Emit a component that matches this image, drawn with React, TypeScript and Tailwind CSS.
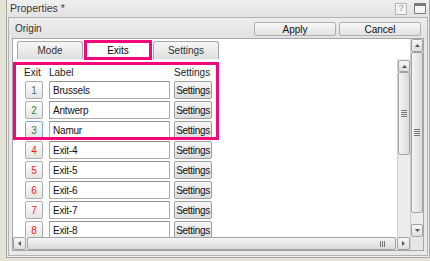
import React from "react";

const Up = () => (
  <svg width="7" height="5" viewBox="0 0 7 5"><path d="M1 4 L3.5 1 L6 4 Z" fill="#555" /></svg>
);
const Down = () => (
  <svg width="7" height="5" viewBox="0 0 7 5"><path d="M1 1 L3.5 4 L6 1 Z" fill="#555" /></svg>
);
const Left = () => (
  <svg width="5" height="7" viewBox="0 0 5 7"><path d="M4 1 L1 3.5 L4 6 Z" fill="#555" /></svg>
);
const Right = () => (
  <svg width="5" height="7" viewBox="0 0 5 7"><path d="M1 1 L4 3.5 L1 6 Z" fill="#555" /></svg>
);

const GripH = () => (
  <div className="flex flex-col gap-[1px]">
    <div className="w-[6px] h-[1px] bg-[#777]" />
    <div className="w-[6px] h-[1px] bg-[#777]" />
    <div className="w-[6px] h-[1px] bg-[#777]" />
    <div className="w-[6px] h-[1px] bg-[#777]" />
  </div>
);
const GripV = () => (
  <div className="flex flex-row gap-[1px]">
    <div className="w-[1px] h-[6px] bg-[#777]" />
    <div className="w-[1px] h-[6px] bg-[#777]" />
    <div className="w-[1px] h-[6px] bg-[#777]" />
  </div>
);

const SBtn = ({ children, cls }: { children: React.ReactNode; cls: string }) => (
  <div
    className={
      "flex items-center justify-center border border-[#a3a3a3] rounded-[2px] bg-gradient-to-b from-[#f8f8f8] to-[#dedede] " +
      cls
    }
  >
    {children}
  </div>
);

const numColors = ["#5b6b5b", "#2e8b2e", "#3a7a3a", "#ff1a1a", "#ff1a1a", "#ff1a1a", "#ff1a1a", "#ff1a1a"];
const labels = ["Brussels", "Antwerp", "Namur", "Exit-4", "Exit-5", "Exit-6", "Exit-7", "Exit-8"];

export default function App() {
  return (
    <div className="w-[430px] h-[261px] bg-[#e4e1d5] pl-[6px] pb-[3px] font-['Liberation_Sans',Arial,sans-serif] text-[10px] text-[#222] overflow-hidden">
      <div className="h-full border-l border-b border-r border-[#a9a9a9] bg-[#ececec] flex flex-col">
        {/* title bar */}
        <div className="h-[17px] flex items-center pl-[3px] pr-[3px] bg-gradient-to-b from-[#efefef] to-[#e3e3e3]">
          <span className="text-[#3a3a3a] text-[10.5px]">Properties *</span>
          <div className="ml-auto flex items-center gap-[7px]">
            <div className="w-[12px] h-[12px] border border-[#b4b4b4] bg-[#f3f3f3] flex items-center justify-center text-[9px] text-[#9a9a9a] leading-none">?</div>
            <div className="w-[12px] h-[11px] border border-[#7a7a7a] border-t-[3px] bg-[#f5f5f5] rounded-[1px]" />
          </div>
        </div>
        {/* panel */}
        <div className="flex-1 mx-[1px] mb-[1px] border border-[#b3b3b3] bg-[#e9e9e9] flex flex-col">
          <div className="h-[20px] flex items-center pl-[6px] pr-[6px] bg-gradient-to-b from-[#ededed] to-[#e2e2e2]">
            <span className="text-[#333]">Origin</span>
            <div className="ml-auto flex gap-[3px] mt-[2px]">
              <div className="w-[82px] h-[14px] border border-[#b0b0b0] rounded-[2px] bg-gradient-to-b from-[#f7f7f7] to-[#e2e2e2] flex items-center justify-center text-[#111]">Apply</div>
              <div className="w-[82px] h-[14px] border border-[#b0b0b0] rounded-[2px] bg-gradient-to-b from-[#f7f7f7] to-[#e2e2e2] flex items-center justify-center text-[#111]">Cancel</div>
            </div>
          </div>
          {/* content box */}
          <div className="flex-1 mx-[3px] mb-[4px] border border-[#a6a6a6] bg-white flex flex-row">
            <div className="flex-1 flex flex-col min-w-0">
              {/* tab strip */}
              <div className="h-[20px] flex items-end pl-[4px] gap-[2px] bg-white">
                <div className="w-[66px] h-[18px] border border-b-0 border-[#a8a8a8] rounded-t-[3px] bg-gradient-to-b from-[#f7f7f7] to-[#dedede] flex items-center justify-center text-[#333]">Mode</div>
                <div className="relative w-[66px] h-[18px] border border-b-0 border-[#a8a8a8] rounded-t-[3px] bg-white flex items-center justify-center text-[#000]">
                  Exits
                  <div className="absolute left-[-2px] top-[-2px] w-[68px] h-[20px] border-[3px] border-[#f2077d]" />
                </div>
                <div className="w-[66px] h-[18px] border border-b-0 border-[#a8a8a8] rounded-t-[3px] bg-gradient-to-b from-[#f7f7f7] to-[#dedede] flex items-center justify-center text-[#333]">Settings</div>
              </div>
              {/* grid area */}
              <div className="flex-1 flex flex-col">
                <div className="h-[178px] flex flex-row">
                  <div className="relative flex-1 overflow-hidden pt-[6px]">
                    <div className="h-[15px] flex items-center text-[#222]">
                      <span className="w-[36px] pl-[11px]">Exit</span>
                      <span className="w-[125px]">Label</span>
                      <span>Settings</span>
                    </div>
                    {labels.map((l, i) => (
                      <div key={i} className="h-[20px] flex items-center pl-[12px]">
                        <div
                          className={
                            "w-[18px] h-[18px] rounded-[2px] border bg-gradient-to-b from-[#fdfdfd] to-[#e4e4e4] flex items-center justify-center " +
                            (i === 2 ? "border-[#7aaad4]" : "border-[#acacac]")
                          }
                          style={{ color: numColors[i] }}
                        >
                          {i + 1}
                        </div>
                        <div className="ml-[6px] w-[121px] h-[18px] border border-[#acacac] border-t-[#8e8e8e] bg-white flex items-center pl-[3px] text-[#111] tracking-[-0.2px]">
                          {l}
                        </div>
                        <div className="ml-[4px] w-[38px] h-[18px] border border-[#9e9e9e] rounded-[2px] bg-gradient-to-b from-[#f7f7f7] to-[#dcdcdc] flex items-center justify-center text-[#111] tracking-[-0.3px]">
                          Settings
                        </div>
                      </div>
                    ))}
                    <div className="absolute left-0 top-[3px] w-[206px] h-[78px] border-[3px] border-[#f2077d]" />
                  </div>
                  {/* inner vscroll */}
                  <div className="w-[13px] flex flex-col pt-[1px] bg-[#ececec] border-l border-[#d0d0d0]">
                    <SBtn cls="h-[12px]"><Up /></SBtn>
                    <div className="h-[83px] border border-[#a3a3a3] rounded-[2px] bg-gradient-to-r from-[#f5f5f5] to-[#dadada] flex items-center justify-center">
                      <GripH />
                    </div>
                    <div className="flex-1 bg-[#ececec]" />
                  </div>
                </div>
                {/* hscroll */}
                <div className="h-[13px] flex flex-row bg-[#ececec]">
                  <SBtn cls="w-[13px] h-[13px]"><Left /></SBtn>
                  <div className="flex-1 mx-[1px] border border-[#a3a3a3] rounded-[2px] bg-gradient-to-b from-[#f5f5f5] to-[#dadada] flex items-center justify-end pr-[10px]">
                    <GripV />
                  </div>
                  <SBtn cls="w-[13px] h-[13px]"><Right /></SBtn>
                </div>
              </div>
            </div>
            {/* outer vscroll */}
            <div className="w-[13px] flex flex-col bg-[#ececec] border-l border-[#cfcfcf]">
              <SBtn cls="h-[13px]"><Up /></SBtn>
              <div className="h-[161px] border border-[#a3a3a3] rounded-[2px] bg-gradient-to-r from-[#f5f5f5] to-[#dadada] flex items-center justify-center">
                <GripH />
              </div>
              <div className="h-[11px]" />
              <SBtn cls="h-[13px]"><Down /></SBtn>
              <div className="flex-1 bg-[#e6e6e6]" />
            </div>
          </div>
        </div>
      </div>
    </div>
  );
}
